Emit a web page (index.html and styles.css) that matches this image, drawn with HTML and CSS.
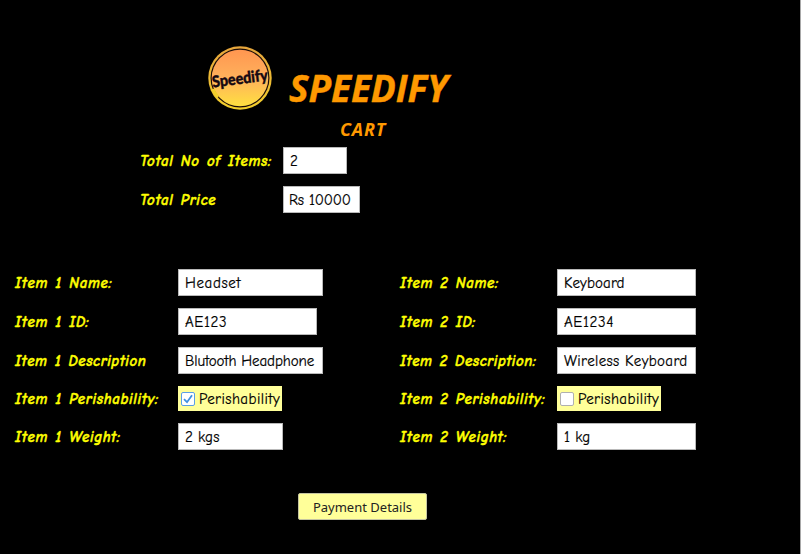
FILE: index.html
```html
<!DOCTYPE html>
<html lang="en">
<head>
<meta charset="utf-8">
<title>Speedify Cart</title>
<link rel="stylesheet" href="styles.css">
</head>
<body>
<main class="window">
  <header class="brand">
    <svg class="logo" width="64" height="64" viewBox="0 0 64 64">
      <defs>
        <linearGradient id="disc" x1="0" y1="0" x2="0" y2="1">
          <stop offset="0" stop-color="#ff9650"/>
          <stop offset=".5" stop-color="#ffb15c"/>
          <stop offset="1" stop-color="#ffe040"/>
        </linearGradient>
        <linearGradient id="rim" x1="0" y1="0" x2="0" y2="1">
          <stop offset="0" stop-color="#e6a53c"/>
          <stop offset="1" stop-color="#f4d02c"/>
        </linearGradient>
      </defs>
      <circle cx="32" cy="32" r="31.7" fill="url(#rim)"/>
      <circle cx="32" cy="32" r="29.5" fill="#1c0c08"/>
      <circle cx="32" cy="32" r="28.3" fill="url(#disc)"/>
      <path d="M5 43Q6.500 47 10 51" fill="none" stroke="#f4d02c" stroke-width="3"/>
      <text class="logo-text" x="4" y="38" textLength="56" lengthAdjust="spacingAndGlyphs" transform="rotate(-7 32 34)">Speedify</text>
    </svg>
    <h1 class="title">SPEEDIFY</h1>
  </header>
  <h2 class="subtitle">CART</h2>
  <section class="form totals">
    <span class="label">Total No of Items:</span><span class="field w64">2</span>
    <span class="label">Total Price</span><span class="field w77 tight">Rs 10000</span>
  </section>
  <div class="items">
    <section class="form first">
      <span class="label">Item 1 Name:</span><span class="field w145 loose">Headset</span>
      <span class="label">Item 1 ID:</span><span class="field w139 loose">AE123</span>
      <span class="label snug">Item 1 Description</span><span class="field w145 tight-text">Blutooth Headphone</span>
      <span class="label">Item 1 Perishability:</span>
      <span class="check"><svg width="14" height="14" viewBox="0 0 14 14"><rect class="box on" x=".5" y=".5" width="13" height="13" rx="1.5"/><path class="tick" d="M3 7.2L6 10.2L11 3.2"/></svg>Perishability</span>
      <span class="label">Item 1 Weight:</span><span class="field w105">2 kgs</span>
    </section>
    <section class="form second">
      <span class="label">Item 2 Name:</span><span class="field w139">Keyboard</span>
      <span class="label">Item 2 ID:</span><span class="field w139 loose">AE1234</span>
      <span class="label snug">Item 2 Description:</span><span class="field w139 wide-text">Wireless Keyboard</span>
      <span class="label">Item 2 Perishability:</span>
      <span class="check"><svg width="14" height="14" viewBox="0 0 14 14"><rect class="box" x=".5" y=".5" width="13" height="13" rx="1.5"/></svg>Perishability</span>
      <span class="label">Item 2 Weight:</span><span class="field w139">1 kg</span>
    </section>
  </div>
  <button class="pay">Payment Details</button>
</main>
</body>
</html>
```
FILE: styles.css
```css
* { box-sizing: border-box; }
body { margin: 0; background: #fff; }
.window {
  width: 801px;
  height: 554px;
  background: #000;
  border-right: 1px solid #a8a8a8;
  padding-top: 46px;
  font-family: "Comic Sans MS", "Comic Neue", "Open Sans", sans-serif;
}
.brand { display: flex; height: 72px; padding-left: 208px; gap: 17px; }
.logo { flex: none; overflow: visible; }
.logo-text { font: 900 16px Lato, sans-serif; fill: #150812; stroke: #150812; stroke-width: .4; }
.title, .subtitle { margin: 0; color: #ff9900; font-family: "Open Sans", sans-serif; font-style: italic; font-weight: bold; white-space: nowrap; }
.title { font-size: 37px; letter-spacing: -.1px; line-height: 49px; padding-top: 17px; -webkit-text-stroke: .4px #ff9900; }
.subtitle { font-size: 18px; letter-spacing: .8px; line-height: 22px; height: 29px; padding: 0 0 0 340px; }
.form { display: grid; row-gap: 12px; justify-items: start; align-items: center; }
.totals { grid-template-columns: 143px auto; padding-left: 140px; }
.items { display: flex; margin-top: 56px; padding-left: 15px; }
.first { grid-template-columns: 163px 222px; }
.second { grid-template-columns: 157px 139px; }
.label { color: #ff0; font-size: 15px; letter-spacing: .62px; word-spacing: 1.4px; font-style: italic; font-weight: bold; line-height: 22px; white-space: nowrap; -webkit-text-stroke: .4px #ff0; }
.snug { letter-spacing: .5px; }
.field { height: 27px; background: #fff; border: 1px solid #b9b9b9; padding-left: 6px; font-size: 15px; letter-spacing: .1px; line-height: 26px; color: #000; white-space: nowrap; -webkit-text-stroke: .2px #000; }
.tight { padding-left: 5px; letter-spacing: -.1px; }
.tight-text { letter-spacing: -.1px; }
.loose { letter-spacing: .6px; }
.wide-text { letter-spacing: .35px; }
.w64 { width: 64px; }
.w77 { width: 77px; }
.w105 { width: 105px; }
.w139 { width: 139px; }
.w145 { width: 145px; }
.check { display: flex; align-items: center; gap: 4px; width: 104px; height: 25px; padding-left: 3px; background: #ff9; font-size: 15px; letter-spacing: .4px; white-space: nowrap; -webkit-text-stroke: .2px #000; }
.check svg { flex: none; }
.box { fill: #fff; stroke: #b0b0b0; }
.box.on { stroke: #5a9fe6; }
.tick { fill: none; stroke: #3f8fe0; stroke-width: 1.8; }
.pay { display: block; width: 129px; height: 27px; margin: 43px 0 0 298px; padding: 0; border: 1px solid #c4c4a0; border-radius: 2px; background: #ff9; color: #222; font: 13px "Noto Sans", sans-serif; }
```
